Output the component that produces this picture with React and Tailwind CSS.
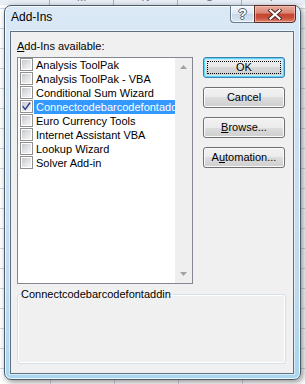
import React from "react";

const items = [
  "Analysis ToolPak",
  "Analysis ToolPak - VBA",
  "Conditional Sum Wizard",
  "Connectcodebarcodefontaddin",
  "Euro Currency Tools",
  "Internet Assistant VBA",
  "Lookup Wizard",
  "Solver Add-in",
];

function CheckBox({ checked }) {
  return (
    <div className="w-[13px] h-[13px] shrink-0 border border-[#8f8f8f] bg-white p-[1px] relative">
      <div className="w-full h-full bg-[linear-gradient(135deg,#c4c8ce_0%,#e2e4e7_55%,#f6f6f6_100%)]" />
      {checked && (
        <svg className="absolute left-[1px] top-[1px]" width="9" height="9" viewBox="0 0 9 9">
          <path d="M1 4.6 L3.2 7.4 L7.8 1" fill="none" stroke="#2a3a8e" strokeWidth="1.4" strokeLinecap="round" strokeLinejoin="round" />
        </svg>
      )}
    </div>
  );
}

function Btn({ children, def }) {
  return (
    <div
      className={
        "relative w-[82px] h-[21px] rounded-[3px] border flex items-center justify-center text-[11px] leading-[13px] text-black " +
        (def
          ? "border-[#3c7fb1] shadow-[inset_0_0_0_1px_#5fd6f7,inset_0_0_0_2px_#bfeafa] bg-[linear-gradient(to_bottom,#f0f0f0_0%,#e8e8e8_50%,#d8d8d8_50%,#cfcfcf_100%)]"
          : "border-[#707070] shadow-[inset_0_0_0_1px_#fbfbfb] bg-[linear-gradient(to_bottom,#f2f2f2_0%,#ebebeb_50%,#dddddd_50%,#cfcfcf_100%)]")
      }
    >
      {def && <span className="absolute inset-[3px] border border-dotted border-black" />}
      <span className="relative">{children}</span>
    </div>
  );
}

export default function App() {
  return (
    <div className="w-[305px] h-[384px] overflow-hidden flex flex-col bg-white bg-[image:linear-gradient(to_right,#d0d7e5_1px,transparent_1px),linear-gradient(to_bottom,#d0d7e5_1px,transparent_1px)] bg-[length:64px_20px] bg-[position:50px_8px] font-['Liberation_Sans',Arial,sans-serif]">
      {/* Excel column header strip */}
      <div className="h-[5px] shrink-0 flex overflow-hidden bg-[#e9eef6]">
        <div className="w-[50px] shrink-0 border-r border-[#9eb6ce]" />
        {["M", "N", "O", "P"].map((c) => (
          <div key={c} className="w-[64px] shrink-0 border-r border-[#9eb6ce] flex justify-center">
            <span className="-mt-[9px] text-[11px] leading-[13px] text-[#5b6d84]">{c}</span>
          </div>
        ))}
      </div>

      {/* Window */}
      <div className="ml-[4px] w-[297px] h-[375px] shrink-0 rounded-[7px] border border-[#4a5b6c] bg-[linear-gradient(to_bottom,#dbe9f6_0%,#cde0f2_35%,#c1d9ee_75%,#a9d6f0_100%)] shadow-[2px_2px_6px_rgba(0,0,0,0.45),inset_0_0_0_1px_rgba(255,255,255,0.8)] flex flex-col">
        {/* Title bar */}
        <div className="h-[25px] shrink-0 flex items-start">
          <span className="pl-[6px] pt-[4px] text-[12px] leading-[15px] text-black">Add-Ins</span>
          <div className="ml-auto mr-[4px] -mt-[1px] flex">
            <div className="w-[24px] h-[18px] rounded-bl-[4px] border border-[#6b7b8c] border-r-0 bg-[linear-gradient(to_bottom,#f3f7fb_0%,#dce7f2_50%,#c7d7e8_50%,#d8e5f1_100%)] shadow-[inset_0_0_0_1px_rgba(255,255,255,0.7)] flex items-center justify-center">
              <span className="text-[14px] leading-[14px] font-bold text-white [text-shadow:0_0_1px_#3c4b5c,1px_0_0_#56687a,-1px_0_0_#56687a,0_1px_0_#56687a,0_-1px_0_#56687a]">?</span>
            </div>
            <div className="w-[42px] h-[18px] rounded-br-[4px] border border-[#5b2a22] bg-[linear-gradient(to_bottom,#e8ab9d_0%,#d98573_45%,#c4452f_50%,#c9503a_75%,#de8670_100%)] shadow-[inset_0_0_0_1px_rgba(255,210,200,0.55)] flex items-center justify-center">
              <svg width="14" height="11" viewBox="0 0 14 11">
                <path d="M2.5 1.5 L11.5 9.5 M11.5 1.5 L2.5 9.5" stroke="#4a2a26" strokeWidth="4.2" strokeLinecap="square" />
                <path d="M2.5 1.5 L11.5 9.5 M11.5 1.5 L2.5 9.5" stroke="#ffffff" strokeWidth="2.2" strokeLinecap="square" />
              </svg>
            </div>
          </div>
        </div>

        {/* Client area */}
        <div className="ml-[5px] w-[284px] h-[343px] shrink-0 border border-[#5f7083] bg-[#f0f0f0] shadow-[0_0_0_1px_rgba(255,255,255,0.55)] flex flex-col pl-[6px] pt-[8px] text-black">
          <div className="flex">
            <div className="w-[176px] flex flex-col">
              <div className="h-[13px] text-[11px] leading-[13px]">
                <span className="underline underline-offset-[1px]">A</span>dd-Ins available:
              </div>
              <div className="mt-[4px] h-[227px] border border-[#828790] bg-white flex">
                <div className="flex-1 flex flex-col overflow-hidden">
                  {items.map((it, i) => (
                    <div key={it} className="h-[14px] flex items-start">
                      <div className="ml-[2px]">
                        <CheckBox checked={i === 3} />
                      </div>
                      <div
                        className={
                          "ml-[1px] pl-[2px] flex-1 h-[14px] text-[11px] leading-[14px] whitespace-nowrap overflow-hidden " +
                          (i === 3 ? "bg-[#3399ff] text-white" : "text-black")
                        }
                      >
                        {it}
                      </div>
                    </div>
                  ))}
                </div>
                <div className="w-[17px] shrink-0 bg-[#efefef] flex flex-col justify-between items-center py-[7px]">
                  <svg width="7" height="4" viewBox="0 0 7 4">
                    <path d="M0 4 L3.5 0 L7 4 Z" fill="#a3a3a3" />
                  </svg>
                  <svg width="7" height="4" viewBox="0 0 7 4">
                    <path d="M0 0 L7 0 L3.5 4 Z" fill="#a3a3a3" />
                  </svg>
                </div>
              </div>
            </div>
            <div className="ml-[10px] mt-[17px] flex flex-col gap-[9px]">
              <Btn def>OK</Btn>
              <Btn>Cancel</Btn>
              <Btn>
                <span className="underline underline-offset-[1px]">B</span>rowse...
              </Btn>
              <Btn>
                A<span className="underline underline-offset-[1px]">u</span>tomation...
              </Btn>
            </div>
          </div>
          <fieldset className="mt-[4px] w-[269px] h-[76px] border border-[#d5dfe5] rounded-[3px] px-[3px] shadow-[inset_0_0_0_1px_#ffffff]">
            <legend className="text-[11px] leading-[13px] pr-[1px]">Connectcodebarcodefontaddin</legend>
          </fieldset>
        </div>
      </div>
    </div>
  );
}
